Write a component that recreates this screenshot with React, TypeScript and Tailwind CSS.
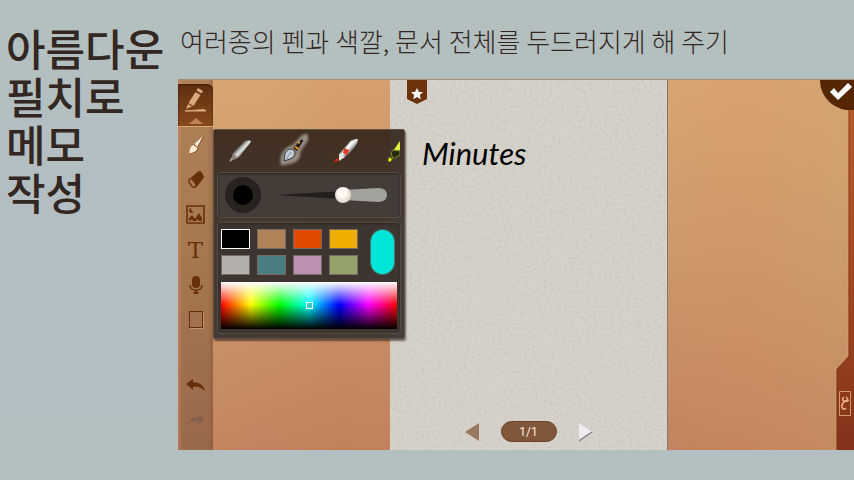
import { useState, type ReactNode } from "react";

const swatches = [
  { name: "검정", tone: "bg-black" },
  { name: "갈색", tone: "bg-[#b08258]" },
  { name: "주황", tone: "bg-[#de4a00]" },
  { name: "노랑", tone: "bg-[#efad00]" },
  { name: "회색", tone: "bg-[#b3afac]" },
  { name: "청록", tone: "bg-[#4a7d80]" },
  { name: "분홍", tone: "bg-[#bd8fb0]" },
  { name: "녹색", tone: "bg-[#93a36b]" },
];

function ToolButton({ label, children }: { label: string; children: ReactNode }) {
  return (
    <button type="button" aria-label={label} className="flex h-[35px] w-full items-center justify-center text-[#66300a]">
      {children}
    </button>
  );
}

function Toolbar() {
  return (
    <nav className="flex w-[35px] shrink-0 flex-col bg-[linear-gradient(to_right,rgba(215,140,100,0.5),transparent_12%,transparent_85%,rgba(120,70,40,0.3)),linear-gradient(to_bottom,#b08258,#a5774f_50%,#99694b)]">
      <button
        type="button"
        aria-label="펜 모드"
        className="mt-1 flex h-[43px] flex-col items-center justify-between rounded-tr-md border-b border-[#d7a67a] bg-linear-to-b from-[#5f2f10] to-[#88491c] pt-1 shadow-[inset_0_1px_2px_#3f1c06]"
      >
        <svg width="22" height="25" viewBox="0 0 22 25" fill="#d9a97f">
          <path d="M13 0l5 3-1.500 2.500-5-3zM10.500 4l5 3-7 11-5-3z" />
          <path d="M3 16l4 2.500L1 21z" />
          <path d="M0 23l19-1.500 2 1.500z" stroke="#d9a97f" strokeWidth="1" />
        </svg>
        <svg width="14" height="8" viewBox="0 0 14 8" fill="#bd8558">
          <path d="M7 0l7 6H0z" />
        </svg>
      </button>
      <ToolButton label="붓">
        <svg width="18" height="22" viewBox="0 0 18 22">
          <path d="M16 2L7.500 10l3 3z" fill="#fff0df" />
          <path d="M6.500 11l4 3c0 3-3 4-8 6 0-5 1-8 4-9z" fill="#ffe9d2" />
          <path d="M2.500 20.500c5-2 8-3 8.500-6.500M11 12.500l5.500-10" stroke="#83502b" fill="none" />
          <path d="M7 10.500l4 3" stroke="#9d683f" />
        </svg>
      </ToolButton>
      <ToolButton label="지우개">
        <svg width="18" height="20" viewBox="0 0 18 20" stroke="#66300a" strokeLinejoin="round">
          <path d="M3 9l8-7q1.500-1 3 0l2 3.500q.8 1.500-.2 3L9 17z" fill="#66300a" />
          <path d="M2.500 9q1.500-1 3 .5l3 4q1.200 1.800 0 3.200-1.500 1.500-3.200-.2l-3-4q-1.200-2 .2-3.500z" fill="#a97950" strokeWidth="1.300" />
        </svg>
      </ToolButton>
      <ToolButton label="그림">
        <svg width="19" height="19" viewBox="0 0 19 19" fill="currentColor">
          <path d="M1 1h17v17H1z" fill="none" stroke="currentColor" strokeWidth="1.600" />
          <path d="M3 16v-3l3-3 3 4 4-6 3 5v3h-3l-1-2-2 2H7l-1-2-2 2z" />
          <path d="M5 3a2.500 2.500 0 1 0 2.500 4Q5 6 5 3z" />
        </svg>
      </ToolButton>
      <ToolButton label="텍스트">
        <span className="font-['DejaVu_Serif',serif] text-[23px] leading-7">T</span>
      </ToolButton>
      <ToolButton label="녹음">
        <svg width="14" height="18" viewBox="0 0 14 18" fill="none" stroke="currentColor">
          <rect x="3" y="0" width="8" height="12" rx="4" fill="currentColor" stroke="none" />
          <path d="M1 9c0 7 12 7 12 0" strokeWidth="1.500" />
          <path d="M7 14v3M4.500 17h5" strokeWidth="2" />
        </svg>
      </ToolButton>
      <ToolButton label="도형">
        <span className="h-[17px] w-[14px] border border-[#66300a] shadow-[1px_1px_0_#c29066]" />
      </ToolButton>
      <div className="mt-[31px]">
        <ToolButton label="실행 취소">
          <svg width="19" height="14" viewBox="0 0 19 14" fill="currentColor">
            <path d="M0 5l7-5v3c7 0 11 4 12 9-4-4-7-5-12-4v3z" />
          </svg>
        </ToolButton>
      </div>
      <div className="opacity-80">
        <ToolButton label="다시 실행">
          <svg width="18" height="13" viewBox="0 0 19 14" fill="#805f4b">
            <path d="M19 5l-7-5v3C5 3 1 7 0 12c4-4 7-5 12-4v3z" />
          </svg>
        </ToolButton>
      </div>
    </nav>
  );
}

function PenRow() {
  return (
    <div className="flex h-[42px] items-center overflow-hidden pl-2">
      <button type="button" aria-label="볼펜" className="mr-6 shrink-0">
        <svg width="30" height="30" viewBox="0 0 30 30">
          <defs>
            <linearGradient id="steel" x1=".2" y1=".2" x2=".8" y2=".8">
              <stop offset=".2" stopColor="#5a5754" />
              <stop offset=".5" stopColor="#e4e4e2" />
              <stop offset=".85" stopColor="#464442" />
            </linearGradient>
          </defs>
          <path d="M8 17L20 5q6-2 6 1L14 21l-4 2z" fill="url(#steel)" />
          <path d="M8 17l5 5-5 2-2-1z" fill="#8a8682" />
          <path d="M6 22l2 2-4 2z" fill="#b5a08e" />
        </svg>
      </button>
      <button type="button" aria-label="만년필" className="mr-6 shrink-0">
        <svg width="30" height="36" viewBox="0 0 30 36">
          <defs>
            <filter id="glow" x="-20%" y="-20%" width="140%" height="140%">
              <feGaussianBlur stdDeviation="1.500" />
            </filter>
          </defs>
          <path d="M3 31Q1 23 8 16l8-4 7-8 4-2q2 2 0 6l-7 10q1 8-7 11z" fill="#958c82" stroke="#cfc7bb" strokeWidth="2" filter="url(#glow)" opacity=".8" />
          <path d="M14 15l9-9 1 2-6 10z" fill="#201b18" />
          <path d="M15 14l4 3 1-2-3-2z" fill="#e48c16" />
          <path d="M19 9l2 1" stroke="#f2a42c" strokeWidth="1.500" />
          <path d="M5 28l1-8q3-5 7-4l3 3q0 5-5 7z" fill="#c3ccd6" stroke="#333d46" />
          <path d="M7 26l5-7" stroke="#8a95a0" fill="none" />
        </svg>
      </button>
      <button type="button" aria-label="색연필" className="mr-[27px] shrink-0">
        <svg width="28" height="30" viewBox="0 0 28 30">
          <path d="M6 18L17 5q8-4 8-1-1 7-13 17l-4 1z" fill="url(#steel)" />
          <path d="M18 5l5-1-11 14-5 1z" fill="#f4f2ef" />
          <path d="M6 18l6 3-6 4z" fill="#e7e4df" />
          <path d="M4 22l2 2-5 3q0-3 3-5z" fill="#d42113" />
          <path d="M11 12l5 2-2 5-4-2z" fill="#e23a25" />
        </svg>
      </button>
      <button type="button" aria-label="형광펜" className="shrink-0">
        <svg width="12" height="26" viewBox="0 0 12 26">
          <path d="M5 13l7-10v9z" fill="#dcf43b" />
          <path d="M3 15l2-3 7 1v4l-7 4z" fill="#252a13" stroke="#7d9021" />
          <path d="M1 19l3 2q-1 4-4 2z" fill="#d1ec10" />
        </svg>
      </button>
    </div>
  );
}

function PenPanel() {
  const [size, setSize] = useState(62);
  const [color, setColor] = useState("검정");
  return (
    <section
      aria-label="펜 설정"
      className="absolute top-[49px] left-[35px] w-[192px] rounded-xs border border-[#5d5148] bg-linear-to-b from-[#34251b]/92 via-[#39302a]/92 to-[#38322e]/92 px-[3px] pb-1 shadow-[1px_2px_2px_rgba(40,28,18,0.6)]"
    >
      <PenRow />
      <div className="flex h-[46px] items-center rounded-sm border border-[#554c46] bg-[#433c37] pl-[7px] shadow-[inset_0_1px_2px_#29231f]">
        <span className="flex size-9 items-center justify-center rounded-full bg-[#28231f]">
          <span className="size-5 rounded-full bg-black" />
        </span>
        <div className="relative ml-4 h-4 w-[110px]">
          <svg width="110" height="16" viewBox="0 0 110 16" className="absolute inset-0">
            <path d="M0 8L66 4v8z" fill="#211e1c" />
            <path d="M66 3L101 1q9 0 9 7t-9 7L66 13z" fill="#a3a29d" />
          </svg>
          <input
            type="range"
            aria-label="펜 굵기"
            value={size}
            onChange={(e) => setSize(Number(e.target.value))}
            className="absolute inset-0 h-4 w-full appearance-none bg-transparent [&::-webkit-slider-thumb]:size-4 [&::-webkit-slider-thumb]:appearance-none [&::-webkit-slider-thumb]:rounded-full [&::-webkit-slider-thumb]:bg-radial-[at_45%_35%] [&::-webkit-slider-thumb]:from-[#fffaf2] [&::-webkit-slider-thumb]:from-30% [&::-webkit-slider-thumb]:to-[#c7b9a9]"
          />
        </div>
      </div>
      <div className="mt-1 rounded-sm border border-[#554c46] bg-[#3e3530] px-[3px] pt-[6px] pb-1 shadow-[inset_0_1px_2px_#29231f]">
        <div className="flex items-center">
          <div className="grid grid-cols-4 gap-x-[7px] gap-y-[6px]">
            {swatches.map((s) => (
              <button
                key={s.name}
                type="button"
                aria-label={s.name}
                aria-pressed={color === s.name}
                onClick={() => setColor(s.name)}
                className={`h-5 w-[29px] border ${s.tone} ${color === s.name ? "border-white" : "border-[#756b64]"}`}
              />
            ))}
          </div>
          <button type="button" aria-label="선택한 색" className="ml-3 h-[46px] w-[25px] rounded-full border border-[#45736e] bg-[#00e5d8]" />
        </div>
        <div className="mt-[7px] flex h-[47px] w-[176px] items-center justify-center bg-[linear-gradient(to_bottom,#fff,rgba(255,255,255,0)_48%,rgba(0,0,0,0)_48%,#000),linear-gradient(to_right,#f00,#ff0_17%,#0f0_33%,#0ff_50%,#00f_67%,#f0f_84%,#f00)]">
          <span className="size-[7px] border border-white bg-[#38cbd0]" />
        </div>
      </div>
    </section>
  );
}

function Paper() {
  return (
    <article className="relative flex w-[278px] shrink-0 flex-col border-r border-[#897764] bg-[#d6d2cb]">
      <svg className="absolute inset-0 size-full" aria-hidden="true">
        <filter id="grain">
          <feTurbulence type="fractalNoise" baseFrequency="0.35" numOctaves="3" seed="8" />
          <feColorMatrix values="0 0 0 0 .43  0 0 0 0 .41  0 0 0 0 .36  1.800 0 0 0 -.82" />
        </filter>
        <rect width="100%" height="100%" filter="url(#grain)" opacity=".4" />
      </svg>
      <button type="button" aria-label="즐겨찾기" className="relative ml-[17px] w-5">
        <svg width="20" height="24" viewBox="0 0 20 24">
          <path d="M0 0h20v19l-10 5-10-5z" fill="#6d330d" />
          <path d="M10 8l1.800 3.800 4.200.4-3.200 2.800 1 4.200L10 17l-3.800 2.200 1-4.200L4 12.200l4.200-.4z" fill="#fff" />
        </svg>
      </button>
      <h2 className="relative mt-[31px] ml-8 font-['Lato',sans-serif] text-[31px] leading-9 text-black italic">Minutes</h2>
      <div className="relative mt-auto flex items-center justify-center gap-[22px] pb-2">
        <button type="button" aria-label="이전 쪽">
          <svg width="14" height="20" viewBox="0 0 14 20">
            <path d="M14 1v18L0 10z" fill="#9a7960" />
          </svg>
        </button>
        <span className="h-[21px] w-14 rounded-full border border-[#684328] bg-[#81573b] text-center font-[Roboto,sans-serif] text-xs leading-5 text-[#fff0dc]">
          1/1
        </span>
        <button type="button" aria-label="다음 쪽">
          <svg width="14" height="20" viewBox="0 0 14 20">
            <path d="M0 1v18l13-9z" fill="#eeecf0" />
            <path d="M0 19l13-9" stroke="#85817d" strokeWidth="1.500" />
          </svg>
        </button>
      </div>
    </article>
  );
}

export default function App() {
  return (
    <div className="flex min-h-screen bg-linear-to-b from-[#b4bfbf] via-[#b3bec4] to-[#b3bfc0] font-['Noto_Sans_CJK_KR',sans-serif] text-[#332722]">
      <h1 className="w-[178px] shrink-0 pt-[23px] pl-[6px] text-[43px] leading-[48px] font-medium whitespace-nowrap">
        아름다운
        <br />
        필치로
        <br />
        메모
        <br />
        작성
      </h1>
      <div className="flex min-w-0 flex-1 flex-col pb-[30px]">
        <p className="h-[79px] pt-[23px] pl-[2px] text-[26px] leading-9 font-light whitespace-nowrap">
          여러종의 펜과 색깔, 문서 전체를 두드러지게 해 주기
        </p>
        <main className="relative flex flex-1 overflow-hidden border-t border-[#a98c71] bg-[linear-gradient(to_right,rgba(205,170,100,0.12),transparent_12%,rgba(190,110,70,0.12)_24%,transparent_72%,rgba(220,140,90,0.14)_84%,rgba(200,170,110,0.2)),linear-gradient(to_bottom,#d7a572,#cb976b_50%,#c28360)]">
          <Toolbar />
          <div className="w-[177px] shrink-0" />
          <Paper />
          <PenPanel />
          <svg className="absolute right-0 bottom-0" width="19" height="371" viewBox="0 0 19 371">
            <defs>
              <linearGradient id="mahogany" x1="0" y1="0" x2="0" y2="1">
                <stop offset="0" stopColor="#b95e2d" />
                <stop offset=".45" stopColor="#aa4b25" />
                <stop offset="1" stopColor="#82321a" />
              </linearGradient>
            </defs>
            <path d="M13 0v277L1 290v81h18V0z" fill="url(#mahogany)" />
            <path d="M13 0v277L1 290v81" fill="none" stroke="#d99a68" />
            <path d="M14 0v278L2 291v80" fill="none" stroke="#76381d" opacity=".6" />
            <path d="M4.500 312.500h11v24h-11z" fill="none" stroke="#d39a6b" />
            <path d="M9 318q-3 3 0 4 5 1 4-1-1-3-2-3M12 321q-6 3-5 7 1 4 4 1" fill="none" stroke="#ecb488" strokeWidth="1.500" />
          </svg>
          <button type="button" aria-label="완료" className="absolute top-0 right-0">
            <svg width="34" height="30" viewBox="0 0 34 30">
              <path d="M0 0a30 30 0 0 0 34 30V0z" fill="#542604" />
              <path d="M10 12l4-4 4 5L28 3l4 4-14 13z" fill="#fff" />
            </svg>
          </button>
        </main>
      </div>
    </div>
  );
}
